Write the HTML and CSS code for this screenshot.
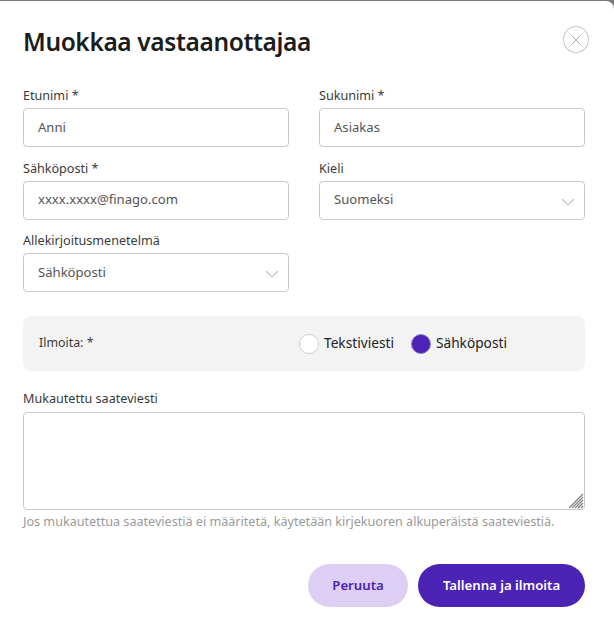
FILE: index.html
```html
<!DOCTYPE html>
<html lang="fi">
  <head>
    <meta charset="UTF-8" />
    <meta name="viewport" content="width=device-width, initial-scale=1.0" />
    <title>Muokkaa vastaanottajaa</title>
    <link rel="stylesheet" href="styles.css">
  </head>
  <body>
    <div class="modal">
      <div class="modal-head">
        <h1>Muokkaa vastaanottajaa</h1>
        <button class="close" aria-label="Sulje">
          <svg width="14" height="14" viewBox="0 0 14 14">
            <path d="M2.5 2.5 11.5 11.5M11.5 2.5 2.5 11.5" stroke="#b0b0b0" stroke-width="1" fill="none" />
          </svg>
        </button>
      </div>

      <div class="fields">
        <div class="field">
          <label>Etunimi *</label>
          <div class="input">Anni</div>
        </div>
        <div class="field">
          <label>Sukunimi *</label>
          <div class="input">Asiakas</div>
        </div>
        <div class="field">
          <label>Sähköposti *</label>
          <div class="input">xxxx.xxxx@finago.com</div>
        </div>
        <div class="field">
          <label>Kieli</label>
          <div class="input select">
            Suomeksi
            <svg class="chevron" width="14" height="8" viewBox="0 0 14 8">
              <path d="M1 1 7 7 13 1" stroke="#c4c4c4" stroke-width="1.1" fill="none" />
            </svg>
          </div>
        </div>
        <div class="field">
          <label>Allekirjoitusmenetelmä</label>
          <div class="input select">
            Sähköposti
            <svg class="chevron" width="14" height="8" viewBox="0 0 14 8">
              <path d="M1 1 7 7 13 1" stroke="#c4c4c4" stroke-width="1.1" fill="none" />
            </svg>
          </div>
        </div>
      </div>

      <div class="notify">
        <span class="notify-label">Ilmoita: *</span>
        <div class="radios">
          <div class="radio"><span class="dot"></span><span class="radio-text">Tekstiviesti</span></div>
          <div class="radio"><span class="dot checked"></span><span class="radio-text">Sähköposti</span></div>
        </div>
      </div>

      <div class="message">
        <label>Mukautettu saateviesti</label>
        <div class="textarea-wrap">
          <textarea></textarea>
          <svg class="grip" width="16" height="16" viewBox="0 0 16 16">
            <path d="M15 1 1 15M15 4 4 15M15 7 7 15M15 10 10 15M15 13 13 15" stroke="#808080" stroke-width="1.2" fill="none" />
          </svg>
        </div>
        <p class="hint">Jos mukautettua saateviestiä ei määritetä, käytetään kirjekuoren alkuperäistä saateviestiä.</p>
      </div>

      <div class="buttons">
        <button class="btn secondary">Peruuta</button>
        <button class="btn primary">Tallenna ja ilmoita</button>
      </div>
    </div>
  </body>
</html>
```

FILE: styles.css
```css
* {
  padding: 0;
  margin: 0;
  box-sizing: border-box;
}
body {
  background-color: #7a7a7a;
  font-family: "Noto Sans", "Open Sans", sans-serif;
  overflow: hidden;
}
.modal {
  height: 630px;
  margin-top: 1px;
  padding: 25px 29px 0 23px;
  background-color: #fff;
  border-radius: 0 8px 0 0;
}
.modal-head {
  display: flex;
  justify-content: space-between;
  align-items: flex-start;
  margin-right: -4px;
  margin-bottom: 27px;
}
h1 {
  font-size: 24.5px;
  font-weight: 600;
  line-height: 32px;
  letter-spacing: -0.38px;
  color: #1c1c1c;
}
.close {
  display: flex;
  justify-content: center;
  align-items: center;
  width: 26px;
  height: 27px;
  background-color: #fff;
  border: 1px solid #c8c8c8;
  border-radius: 50%;
}
.fields {
  display: grid;
  grid-template-columns: 266px 266px;
  column-gap: 30px;
  row-gap: 10.5px;
}
label {
  display: block;
  height: 23px;
  padding-top: 1px;
  font-size: 12.6px;
  line-height: 20px;
  color: #3a3a3a;
}
.input {
  display: flex;
  align-items: center;
  justify-content: space-between;
  height: 39px;
  padding: 0 15px 2px 14px;
  border: 1px solid #c9c9c9;
  border-radius: 4px;
  font-size: 13.1px;
  color: #555;
}
.chevron {
  margin-top: 5px;
  margin-right: -6px;
}
.notify {
  display: flex;
  align-items: center;
  height: 55px;
  margin-top: 24px;
  padding-left: 16px;
  background-color: #f3f3f3;
  border-radius: 8px;
}
.notify-label {
  width: 260px;
  padding-bottom: 2px;
  font-size: 12.4px;
  color: #3a3a3a;
}
.radios {
  display: flex;
  gap: 17px;
}
.radio {
  display: flex;
  align-items: center;
  gap: 5px;
  font-size: 13.7px;
  color: #222;
}
.radio-text {
  padding-bottom: 2px;
}
.dot {
  width: 20px;
  height: 20px;
  background-color: #fff;
  border: 1px solid #cfcfcf;
  border-radius: 50%;
}
.dot.checked {
  background-color: #4b23b5;
  border-color: #8f7fc4;
}
.message {
  margin-top: 17px;
}
.textarea-wrap {
  position: relative;
  margin-top: 1px;
}
textarea {
  display: block;
  width: 562px;
  height: 98px;
  background-color: #fff;
  border: 1px solid #c9c9c9;
  border-radius: 4px;
  resize: none;
}
.grip {
  position: absolute;
  right: 1px;
  bottom: 1px;
}
.hint {
  margin-top: 3px;
  font-size: 12.6px;
  line-height: 17px;
  color: #9a9a9a;
  white-space: nowrap;
}
.buttons {
  display: flex;
  justify-content: flex-end;
  gap: 10px;
  width: 562px;
  margin-top: 34px;
}
.btn {
  height: 43px;
  padding-bottom: 2px;
  border: 0;
  border-radius: 22px;
  font-family: inherit;
  font-size: 13.2px;
  font-weight: 600;
}
.secondary {
  width: 100px;
  background-color: #dccff3;
  color: #4b23b5;
}
.primary {
  width: 167px;
  background-color: #4b23b5;
  color: #fff;
}
```
